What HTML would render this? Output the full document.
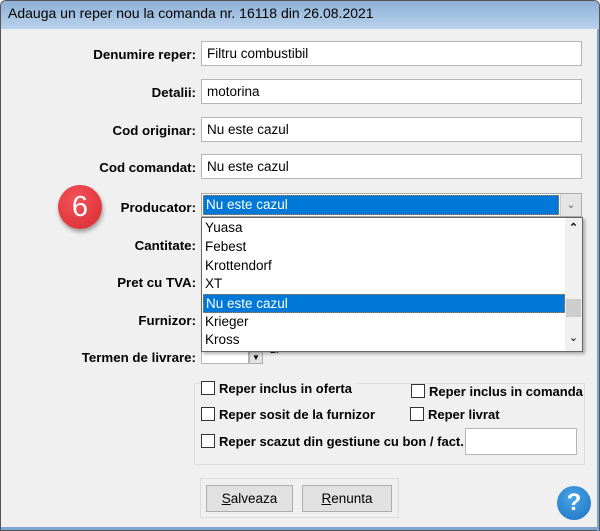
<!DOCTYPE html>
<html><head><meta charset="utf-8"><style>
*{box-sizing:border-box;margin:0;padding:0}
body{width:600px;height:531px;overflow:hidden;background:#f0f0f0;font-family:"Liberation Sans",Arial,sans-serif;font-size:13px;color:#000;position:relative}
.frame{position:absolute;left:0;top:0;width:600px;height:531px;border:1px solid #555;border-radius:6px 6px 0 0;background:#f0f0f0}
.title{position:absolute;left:1px;top:1px;right:1px;height:28px;background:linear-gradient(#8eb0d6,#b9d2ec);border-radius:5px 5px 0 0;font-size:14px;padding:4px 0 0 7px;color:#000}
.edge{position:absolute;right:1px;top:29px;width:2px;bottom:0;background:#7fa6d3}
.edgeB{position:absolute;left:1px;right:1px;bottom:1px;height:3px;background:#7fa6d3}
.lbl{position:absolute;right:404px;font-weight:bold;font-size:13.3px;white-space:nowrap}
.inp{position:absolute;left:201px;width:381px;height:25px;background:#fff;border:1px solid #b5b5b5;padding:4px 0 0 5px;font-size:13.5px}
.item{position:absolute;left:1px;width:362px;height:19px;padding:1px 0 0 2px;font-size:13.5px}
.cb{position:absolute;font-weight:bold;font-size:13px;white-space:nowrap}
.cb i{display:inline-block;width:14px;height:14px;border:1px solid #333;background:#fff;vertical-align:-2px;margin-right:4px}
.btn{position:absolute;top:485px;height:27px;background:#e1e1e1;border:1px solid #adadad;text-align:center;padding-top:5px;font-size:13.5px}
</style></head><body>
<div class="frame"></div>
<div class="title">Adauga un reper nou la comanda nr. 16118 din 26.08.2021</div>
<div class="edge"></div><div class="edgeB"></div>

<div class="lbl" style="top:47px">Denumire reper:</div>
<div class="inp" style="top:41px">Filtru combustibil</div>
<div class="lbl" style="top:85px">Detalii:</div>
<div class="inp" style="top:79px">motorina</div>
<div class="lbl" style="top:123px">Cod originar:</div>
<div class="inp" style="top:117px">Nu este cazul</div>
<div class="lbl" style="top:160px">Cod comandat:</div>
<div class="inp" style="top:154px">Nu este cazul</div>
<div class="lbl" style="top:200px">Producator:</div>
<div class="lbl" style="top:238px">Cantitate:</div>
<div class="lbl" style="top:275px">Pret cu TVA:</div>
<div class="lbl" style="top:313px">Furnizor:</div>
<div class="lbl" style="top:350px">Termen de livrare:</div>

<div style="position:absolute;left:201px;top:340px;width:48px;height:24px;background:#fff;border:1px solid #b5b5b5"></div>
<div style="position:absolute;left:249px;top:350px;width:14px;height:14px;background:#e1e1e1;border:1px solid #adadad;font-size:8px;text-align:center;line-height:14px">▼</div>
<div style="position:absolute;left:270px;top:342px;font-size:12px">zi</div>

<div style="position:absolute;left:58px;top:185px;width:44px;height:44px;border-radius:50%;background:radial-gradient(circle at 40% 35%,#f2545a,#d82a30);box-shadow:1px 3px 4px rgba(0,0,0,.35);color:#fff;font-size:29px;text-align:center;line-height:44px">6</div>

<div style="position:absolute;left:201px;top:193px;width:381px;height:24px;background:#fff;border:1px solid #aaa"></div>
<div style="position:absolute;left:203px;top:195px;width:356px;height:20px;background:#0078d7;border:1px dotted #c87a30;color:#fff;font-size:13.5px;padding:1px 0 0 2px">Nu este cazul</div>
<div style="position:absolute;left:560px;top:194px;width:21px;height:22px;background:#e5e5e5;border-left:1px solid #ccc;color:#666;font-size:11px;text-align:center;line-height:22px">&#8964;</div>

<div style="position:absolute;left:201px;top:217px;width:382px;height:135px;background:#fff;border:1px solid #666;box-shadow:2px 2px 3px rgba(0,0,0,.3)">
 <div class="item" style="top:1px">Yuasa</div>
 <div class="item" style="top:20px">Febest</div>
 <div class="item" style="top:39px">Krottendorf</div>
 <div class="item" style="top:57px">XT</div>
 <div class="item" style="top:76px;background:#0078d7;color:#fff;border:1px dotted #c87a30">Nu este cazul</div>
 <div class="item" style="top:95px">Krieger</div>
 <div class="item" style="top:113px">Kross</div>
 <div style="position:absolute;left:363px;top:0;width:17px;height:133px;background:#f0f0f0"></div>
 <div style="position:absolute;left:363px;top:1px;width:17px;height:17px;font-size:11px;font-weight:bold;text-align:center;line-height:18px">&#8963;</div>
 <div style="position:absolute;left:364px;top:81px;width:15px;height:18px;background:#cdcdcd"></div>
 <div style="position:absolute;left:363px;top:114px;width:17px;height:17px;font-size:11px;text-align:center;line-height:12px">&#8964;</div>
</div>

<div style="position:absolute;left:194px;top:383px;width:391px;height:82px;border:1px solid #dcdcdc"></div>
<div class="cb" style="left:201px;top:381px;background:#f0f0f0;padding-right:6px"><i></i>Reper inclus in oferta</div>
<div class="cb" style="left:411px;top:384px;background:#f0f0f0"><i></i>Reper inclus in comanda</div>
<div class="cb" style="left:201px;top:407px"><i></i>Reper sosit de la furnizor</div>
<div class="cb" style="left:410px;top:407px"><i></i>Reper livrat</div>
<div class="cb" style="left:201px;top:434px"><i></i>Reper scazut din gestiune cu bon / fact.</div>
<div style="position:absolute;left:465px;top:428px;width:112px;height:27px;background:#fff;border:1px solid #b5b5b5"></div>

<div style="position:absolute;left:200px;top:478px;width:199px;height:40px;border:1px solid #dcdcdc"></div>
<div class="btn" style="left:206px;width:87px"><u>S</u>alveaza</div>
<div class="btn" style="left:302px;width:90px"><u>R</u>enunta</div>

<div style="position:absolute;left:557px;top:486px;width:34px;height:34px;border-radius:50%;background:radial-gradient(circle at 45% 35%,#4aa6e8,#1b6fc0);color:#fff;font-weight:bold;font-size:24px;text-align:center;line-height:34px">?</div>
</body></html>
